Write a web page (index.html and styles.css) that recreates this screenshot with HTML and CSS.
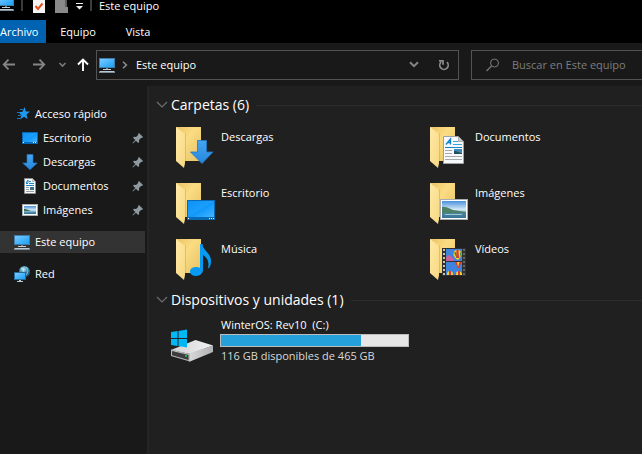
FILE: index.html
```
<!DOCTYPE html>
<html lang="es">
<head>
<meta charset="utf-8">
<title>Este equipo</title>
<link rel="stylesheet" href="styles.css">
</head>
<body>
<svg class="defs" aria-hidden="true">
  <defs>
    <linearGradient id="screen" x1="0" y1="0" x2="1" y2="1"><stop offset="0" stop-color="#7dcbff"/><stop offset=".5" stop-color="#4ab5fb"/><stop offset="1" stop-color="#1ba1f8"/></linearGradient>
    <linearGradient id="desk" x1="0" y1="0" x2="1" y2="1"><stop offset="0" stop-color="#0a93f8"/><stop offset=".48" stop-color="#1c9dfa"/><stop offset=".52" stop-color="#0e98fa"/><stop offset="1" stop-color="#45b4ff"/></linearGradient>
    <linearGradient id="back" x1="0" y1="0" x2="1" y2="1"><stop offset="0" stop-color="#e9c463"/><stop offset=".4" stop-color="#fbdc82"/><stop offset="1" stop-color="#e6c263"/></linearGradient>
    <linearGradient id="flap" x1="0" y1="0" x2="1" y2="1"><stop offset="0" stop-color="#ffe9a8"/><stop offset="1" stop-color="#f8d981"/></linearGradient>
    <linearGradient id="arrow" x1="0" y1="0" x2="0" y2="1"><stop offset="0" stop-color="#46a5f0"/><stop offset="1" stop-color="#2686de"/></linearGradient>
    <linearGradient id="sky" x1="0" y1="0" x2="0" y2="1"><stop offset="0" stop-color="#4a92dc"/><stop offset=".5" stop-color="#d4e9f7"/><stop offset=".75" stop-color="#5d9bb4"/><stop offset="1" stop-color="#2b6c94"/></linearGradient>
    <radialGradient id="globe" cx=".4" cy=".3"><stop offset="0" stop-color="#d9f2fa"/><stop offset=".5" stop-color="#62aac9"/><stop offset="1" stop-color="#1f6688"/></radialGradient>
    <linearGradient id="metal" x1="0" y1="0" x2="1" y2="0"><stop offset="0" stop-color="#d2d2d4"/><stop offset="1" stop-color="#f1f1f2"/></linearGradient>
    <linearGradient id="side" x1="0" y1="0" x2="1" y2="0"><stop offset="0" stop-color="#d8d8da"/><stop offset="1" stop-color="#b0b1b4"/></linearGradient>
    <symbol id="i-pc" viewBox="0 0 16 16">
      <path fill="#3f7da6" d="M0 1h16v10H0z"/><path fill="url(#screen)" d="M1 2h14v8H1z"/>
      <path fill="#6d8494" d="M7 11h2v1H7z"/><path fill="#c3ced6" d="M4 12h8v1H4z"/><path fill="#b9cad6" d="M1 14h14l1 1H0z"/><path fill="#7e909d" d="M0 15h16v1H0z"/>
    </symbol>
    <symbol id="i-star" viewBox="0 0 16 16">
      <path fill="#1e9bf0" d="m9.600 1 1.200 4.500 4.200.1-3.500 3L12.500 13 9 10.800 5 13.500l1.500-4.300L3.500 6.300l4-.5z"/>
      <path stroke="#1b79ba" d="M5 3.500h3M2 6.500h3M3 9.500h3M2 12.500h3" fill="none"/>
    </symbol>
    <symbol id="i-desktop" viewBox="0 0 16 16"><path fill="#0869b5" d="M0 2h16v12H0z"/><path fill="url(#desk)" d="M1 3h14v9H1z"/><path fill="#fff" d="M1 12h1v1H1zm10 0h1v1h-1zm2 0h1v1h-1z"/></symbol>
    <symbol id="i-down" viewBox="0 0 16 16"><path fill="url(#arrow)" stroke="#2279c4" stroke-width=".6" d="M5 .5h6V9h4.300L8 15.700.7 9H5z"/></symbol>
    <symbol id="i-doc" viewBox="0 0 16 16">
      <path fill="#f8f9fa" stroke="#8d9092" d="M2.500.5h8l3 3v12h-11z"/><path fill="#b9bcbf" d="M10 1v3h3z"/>
      <path stroke="#1683cd" d="M7 3.500h2M4 5.500h2M7 5.500h5M4 7.500h8" fill="none"/><path stroke="#1683cd" d="m4 5 2-3v3" fill="none"/><path stroke="#9b9ea1" d="M4 9.500h3M4 11.500h3M4 13.500h8"/><path fill="#3b7188" d="M8 9h4v3H8z"/>
    </symbol>
    <symbol id="i-pic" viewBox="0 0 16 16"><path fill="#aaadaf" d="M0 2h16v12H0z"/><path fill="#fff" d="M1 3h14v10H1z"/><path fill="url(#sky)" d="M2 4h12v8H2z"/><path fill="#3e6f4e" d="M2 7c4 0 5 2 8 2H2z"/></symbol>
    <symbol id="i-net" viewBox="0 0 16 16">
      <circle cx="10.500" cy="5.500" r="5.500" fill="url(#globe)"/><path stroke="#c4eaf5" stroke-width=".7" fill="none" d="M7 2c3 1 3 4 2 6M12 1c3 3 2 6 0 8"/>
      <path fill="#276b98" d="M0 6h12v8H0z"/><path fill="url(#screen)" d="M1 7h10v6H1z"/><path fill="#b8cbd7" d="M5 14h2v1h2v1H3v-1h2z"/>
    </symbol>
    <symbol id="i-pin" viewBox="0 0 12 12"><path fill="#8e9aa2" d="m7 1 4 4-1 1-.7-.3L7 8l.2 2-1 1-2.300-2.300L1 11.500l-.5-.5 2.800-2.900L1 5.800l1-1 2 .2 2.300-2.300L6 2z"/></symbol>
    <symbol id="i-open" viewBox="0 0 12 8"><path fill="none" stroke="#6e6e6e" stroke-width="1.200" d="m1 1 5 5 5-5"/></symbol>
    <symbol id="i-folder" viewBox="0 0 46 48">
      <path fill="url(#back)" d="M5 4h25v34H5z"/><path fill="#c9a452" d="m14 10 1 1v27h-2z" opacity=".5"/><path fill="url(#flap)" d="m5 4 9 7v29l-1 5-8-7z"/>
    </symbol>
  </defs>
</svg>

<header class="titlebar">
  <svg class="title-pc" viewBox="2 5 14 11"><use href="#i-pc" width="16" height="16"/></svg>
  <span class="bar"></span>
  <svg class="title-check" width="12" height="13" viewBox="0 0 12 13"><path fill="#f4f4f4" d="M0 0h12v13H0z"/><path fill="none" stroke="#e2511d" stroke-width="2" d="m2.500 6 2.500 3L9.500 3.500"/></svg>
  <svg class="title-new" width="13" height="13" viewBox="0 0 13 13"><path fill="#8a8a8a" d="M0 0h10v7h3v6H0z"/><path fill="#5d5d5d" d="M10 0h2v7h-2z"/></svg>
  <svg class="title-more" width="7" height="7" viewBox="0 0 7 7"><path fill="#eee" d="M0 0h7v1H0zM0 3h7L3.500 6.500z"/></svg>
  <span class="bar"></span>
  <span class="title">Este equipo</span>
</header>

<nav class="tabs">
  <button class="tab tab-file">Archivo</button>
  <button class="tab">Equipo</button>
  <button class="tab">Vista</button>
</nav>

<div class="toolbar">
  <button class="nav-btn" aria-label="Atrás"><svg width="16" height="16" viewBox="0 0 16 16"><path fill="none" stroke="#858585" stroke-width="1.800" d="M14 7.500H3M7.500 2.700 2.700 7.500l4.800 4.800"/></svg></button>
  <button class="nav-btn nav-forward" aria-label="Adelante"><svg width="16" height="16" viewBox="0 0 16 16"><path fill="none" stroke="#858585" stroke-width="1.800" d="M2 7.500h11M8.500 2.700l4.800 4.800-4.800 4.800"/></svg></button>
  <button class="nav-btn nav-recent" aria-label="Ubicaciones recientes"><svg width="9" height="6" viewBox="0 0 9 6"><path fill="none" stroke="#7b7b7b" stroke-width="1.600" d="M1.500 1 4.500 4l3-3"/></svg></button>
  <button class="nav-btn nav-up" aria-label="Subir"><svg width="16" height="16" viewBox="0 0 16 16"><path fill="none" stroke="#fff" stroke-width="1.900" d="M8 14V3M3 7.500l5-5 5 5"/></svg></button>
  <div class="address">
    <svg width="16" height="16"><use href="#i-pc"/></svg>
    <svg class="crumb" width="6" height="8" viewBox="0 0 6 8"><path fill="none" stroke="#909090" stroke-width="1.500" d="m1 .7 3.400 3.300L1 7.300"/></svg>
    <span class="address-text">Este equipo</span>
    <button class="nav-btn" aria-label="Historial"><svg width="10" height="7" viewBox="0 0 10 7"><path fill="none" stroke="#858585" stroke-width="2" d="m1 1.200 4 4 4-4"/></svg></button>
    <button class="nav-btn refresh" aria-label="Actualizar"><svg width="12" height="12" viewBox="0 0 12 12"><path fill="none" stroke="#8c8c8c" stroke-width="1.700" d="M9 3.200A4.200 4.200 0 1 1 3 3.200M1 1.800H5V5.800"/></svg></button>
  </div>
  <label class="search">
    <svg width="14" height="14" viewBox="0 0 14 14"><circle cx="8.500" cy="5" r="4" fill="none" stroke="#7a7a7a"/><path stroke="#7a7a7a" stroke-width="1.200" d="m5.500 8-5 5"/></svg>
    <input type="search" placeholder="Buscar en Este equipo" aria-label="Buscar en Este equipo">
  </label>
</div>

<div class="body">
  <nav class="sidebar">
    <a class="place" href="#"><svg width="16" height="16"><use href="#i-star"/></svg>Acceso rápido</a>
    <a class="place child" href="#"><svg width="16" height="16"><use href="#i-desktop"/></svg>Escritorio<svg class="pin" width="12" height="12"><use href="#i-pin"/></svg></a>
    <a class="place child" href="#"><svg width="16" height="16"><use href="#i-down"/></svg>Descargas<svg class="pin" width="12" height="12"><use href="#i-pin"/></svg></a>
    <a class="place child" href="#"><svg width="16" height="16"><use href="#i-doc"/></svg>Documentos<svg class="pin" width="12" height="12"><use href="#i-pin"/></svg></a>
    <a class="place child" href="#"><svg width="16" height="16"><use href="#i-pic"/></svg>Imágenes<svg class="pin" width="12" height="12"><use href="#i-pin"/></svg></a>
    <a class="place root selected" href="#"><svg width="16" height="16"><use href="#i-pc"/></svg>Este equipo</a>
    <a class="place root" href="#"><svg width="16" height="16"><use href="#i-net"/></svg>Red</a>
  </nav>

  <main class="content">
    <h2 class="group"><svg width="12" height="8"><use href="#i-open"/></svg>Carpetas (6)</h2>
    <div class="folders">
      <a class="item" href="#"><svg width="46" height="48" viewBox="0 0 46 48"><use href="#i-folder"/><path fill="url(#arrow)" stroke="#2279c4" stroke-width=".8" d="M26.500 17.500h9V29H42L31 40.500 19.500 29h7z"/></svg><span>Descargas</span></a>
      <a class="item" href="#"><svg width="46" height="48" viewBox="0 0 46 48"><use href="#i-folder"/>
        <path fill="#f8f9fa" stroke="#a0a3a5" d="M18.500 13.500h15l5 5v22h-20z"/><path fill="#c7cacc" stroke="#888b8d" stroke-width=".6" d="M33.500 13.500v5h5z"/>
        <path fill="none" stroke="#1683cd" stroke-width="1.400" d="m21 21.500 4.500-5.500v5.500M22.500 19.500h3"/><path stroke="#35a4df" d="M28 18.500h5M28 21.500h9"/><path stroke="#1683cd" d="M20 24.500h17"/><path stroke="#a6a9ab" d="M20 27.500h7M20 30.500h7M20 33.500h17M20 36.500h17"/><path fill="#4188b9" d="M29 26h8v5h-8z"/><path fill="#23515b" d="M29 28c4 0 5 2 8 2v1h-8z"/></svg><span>Documentos</span></a>
      <a class="item" href="#"><svg width="46" height="48" viewBox="0 0 46 48"><use href="#i-folder"/><path fill="#0869b5" d="M16 21h28v20H16z"/><path fill="url(#desk)" d="M17 22h26v16H17z"/><path fill="#fff" d="M17 39h1v1h-1zm21 0h1v1h-1zm2 0h1v1h-1zm2 0h1v1h-1z"/></svg><span>Escritorio</span></a>
      <a class="item" href="#"><svg width="46" height="48" viewBox="0 0 46 48"><use href="#i-folder"/><path fill="#aaadaf" d="M15 20h28v21H15z"/><path fill="#fff" d="M16 21h26v19H16z"/><path fill="url(#sky)" d="M17 22h24v17H17z"/><path fill="#4d8069" d="M17 28c5-1 7 2 11 3 5 1 8 1 13 2v1H17z"/><path fill="#3f7899" d="M17 34h24v5H17z" opacity=".7"/><path stroke="#9cc7d5" d="M20 35.500h17"/></svg><span>Imágenes</span></a>
      <a class="item" href="#"><svg width="46" height="48" viewBox="0 0 46 48"><use href="#i-folder"/><path fill="#069af3" d="M29 9h2.500c0 6 8.500 9 8.500 17 0 5-2 8-3 7 1-4 1-9-5-13v15c0 3-3 6-7 6-8 0-8-9 0-9 1 0 3 0 4 1z"/></svg><span>Música</span></a>
      <a class="item" href="#"><svg width="46" height="48" viewBox="0 0 46 48"><use href="#i-folder"/><path fill="#303030" d="M17 13h24v28H17z"/><path fill="#3f83dc" d="M21 14h16v12H21zm0 13h16v13H21z"/><path fill="#c9629c" d="m21 22 3-2 5 4v2h-8z"/><path fill="#f2d338" d="M28.500 19a4 4 0 0 1 8 0c0 2.500-2 4-3 5.500h-2c-1-1.500-3-3-3-5.500zM22 39c0-4 6-4 6 0v1h-6z"/><path fill="#e2372f" d="M31.500 15h2l.5 8h-3zM24 36h2v4h-2zM30 27h6.500c-1 3-2.500 4-2.500 6h-1.500c0-2-1.500-3-2.500-6z"/><path fill="#2d8d47" d="m29 17.500 2-.5.5 6zm6.500-1 1 2-2 5z"/><path fill="#f2d338" d="m32 27 1 5 1.500-5zM31 39c0-4 5-4 6 0v1h-6z"/><path fill="#e2372f" d="M33 36h2v4h-2z"/><path stroke="#d5c494" stroke-width="2" stroke-dasharray="2 2" d="M19 14v26"/><path stroke="#777" stroke-width="1.500" stroke-dasharray="2 2" d="M39 14v26"/></svg><span>Vídeos</span></a>
    </div>

    <h2 class="group"><svg width="12" height="8"><use href="#i-open"/></svg>Dispositivos y unidades (1)</h2>
    <a class="drive" href="#">
      <svg width="42" height="34" viewBox="0 0 42 34">
        <path fill="url(#metal)" d="m0 21 24.500-10L42 16.500 19 25z"/><path fill="url(#side)" d="m18 24.500 24-8V23l-23 9.500h-1z"/><path fill="#b9babc" d="m0 20.500 19 4.500v7.500L0 27z"/><path fill="#3c3d3f" d="m1 22 16.500 4v5L1 26.200z"/><path fill="#18d63c" d="m14 26 2 .5V28l-2-.5z"/>
        <path fill="#00b8f5" d="m0 3 6.500-1v7H0zM7.500 2 16 .5V9H7.500zM0 10h6.500v7L0 16zM7.500 10H16v8.500L7.500 17z"/>
      </svg>
      <span class="drive-info">
        <span class="drive-name">WinterOS: Rev10 &nbsp;(C:)</span>
        <span class="meter"><span class="fill" style="width:75%"></span></span>
        <span class="free">116 GB disponibles de 465 GB</span>
      </span>
    </a>
  </main>
</div>
</body>
</html>
```
FILE: styles.css
```
* { box-sizing: border-box; }

body {
  margin: 0;
  min-height: 100vh;
  display: flex;
  flex-direction: column;
  background: #191919;
  color: #fff;
  font: 11px/16px "Open Sans", "Noto Sans", sans-serif;
}

svg { display: block; flex: none; }
a { color: inherit; text-decoration: none; }
button, input { font: inherit; color: inherit; background: none; border: 0; padding: 0; }

.defs { position: absolute; width: 0; height: 0; }

.titlebar {
  display: flex;
  align-items: flex-start;
  height: 20px;
  background: #000;
  white-space: nowrap;
}
.title-pc { width: 14px; height: 11px; }
.bar { width: 2px; height: 11px; margin-left: 7px; background: #3c3c3c; }
.title-check { margin-left: 10px; }
.title-new { margin-left: 10px; }
.title-more { margin: 3px 0 0 8px; }
.title { margin-left: 7px; line-height: 12px; }

.tabs { display: flex; height: 23px; background: #000; }
.tab { width: 48px; margin-left: 8px; text-align: center; }
.tab-file { width: 46px; margin: 0; padding-right: 8px; background: #0063b1; }
.tab:last-child { margin-left: 12px; }

.toolbar { display: flex; align-items: center; height: 43px; padding: 0 0 0 1px; }
.nav-btn { flex: none; display: flex; align-items: center; justify-content: center; }
.nav-forward { margin-left: 14px; }
.nav-recent { margin-left: 11px; }
.nav-up { margin: 0 5px 0 8px; }

.address {
  flex: 1;
  display: flex;
  align-items: center;
  height: 30px;
  padding: 0 8px 0 2px;
  border: 1px solid #535353;
}
.crumb { margin-left: 7px; }
.address-text { flex: 1; margin-left: 8px; }
.refresh { margin-left: 19px; }

.search {
  flex: 0 1 171px;
  display: flex;
  align-items: center;
  min-width: 0;
  height: 30px;
  margin-left: 12px;
  padding-left: 14px;
  border: 1px solid #535353;
  border-right: 0;
}
.search input { flex: 1; min-width: 0; margin-left: 12px; outline: 0; }
.search input::placeholder { color: #7d7d7d; opacity: 1; }

.body { flex: 1; display: flex; }

.sidebar { width: 149px; flex: none; padding: 16px 2px 0 0; border-right: 2px solid #252525; }
.place { display: flex; align-items: center; gap: 4px; height: 24px; padding: 0 1px 0 15px; }
.child { padding-left: 22px; gap: 5px; }
.pin { margin-left: auto; }
.root { height: 22px; padding-left: 14px; gap: 5px; margin-top: 10px; }
.child + .root { margin-top: 9px; }
.selected { background: #333; }

.content { flex: 1; min-width: 0; padding: 7px 0 0 7px; background: #202020; }
.group {
  display: flex;
  align-items: center;
  height: 24px;
  margin: 0;
  font-size: 14px;
  font-weight: 400;
  white-space: nowrap;
}
.group svg { margin-right: 3px; }
.group::after { content: ""; flex: 1; height: 1px; margin-left: 7px; background: #2d2d2d; }

.folders {
  display: grid;
  grid-template-columns: 254px 1fr;
  grid-auto-rows: 56px;
  margin: 2px 0 1px 15px;
}
.item { display: flex; gap: 4px; padding-top: 4px; }
.item span { padding-top: 6px; }

.drive { display: flex; gap: 7px; padding: 5px 0 0 15px; }
.drive > svg { margin-top: 12px; }
.drive-info { width: 189px; }
.drive-name, .free { display: block; padding-left: 1px; white-space: nowrap; }
.free { color: #d8d8d8; }
.meter { display: block; height: 13px; margin: 1px 0; border: 1px solid #bcbcbc; background: #e6e6e6; }
.fill { display: block; height: 100%; background: #26a0da; }
```
